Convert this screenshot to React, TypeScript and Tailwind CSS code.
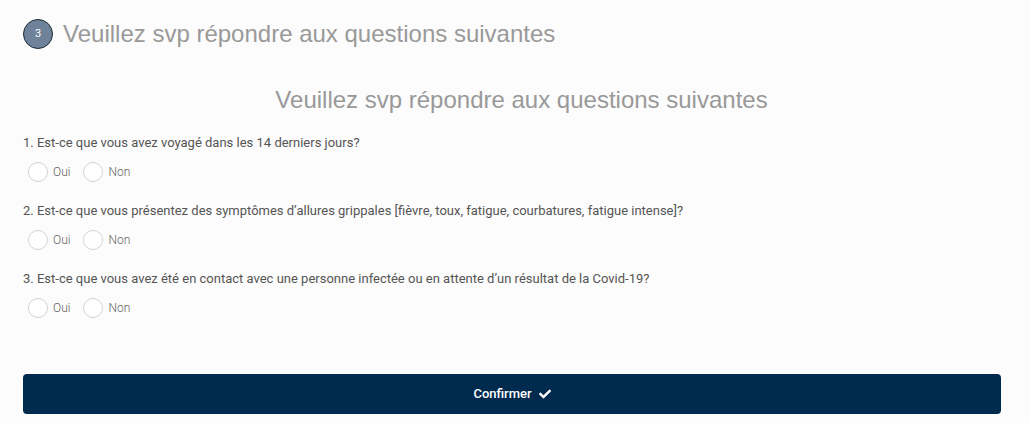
import React from "react";
import { FaCheck } from "react-icons/fa";

const questions = [
  "1. Est-ce que vous avez voyagé dans les 14 derniers jours?",
  "2. Est-ce que vous présentez des symptômes d’allures grippales [fièvre, toux, fatigue, courbatures, fatigue intense]?",
  "3. Est-ce que vous avez été en contact avec une personne infectée ou en attente d’un résultat de la Covid-19?",
];

const Radio: React.FC<{ label: string }> = ({ label }) => (
  <label className="flex items-center gap-[5px] mr-[13px]">
    <span className="w-[20px] h-[20px] rounded-full border border-[#d4d4d4] bg-white" />
    <span className="text-[12px] font-light text-[#666]">{label}</span>
  </label>
);

export default function App() {
  return (
    <div className="min-h-[423px] bg-[#fcfcfc] pl-[23px] pr-[28px] pt-[19px]" style={{ fontFamily: "Roboto, 'Liberation Sans', sans-serif" }}>
      <div className="flex items-center gap-[10px] h-[30px]">
        <span className="w-[30px] h-[30px] rounded-full bg-[#6e8399] border border-[#1d2a38] flex items-center justify-center text-white text-[11px]">
          3
        </span>
        <h2 className="text-[24px] text-[#999] leading-none" style={{ fontFamily: "'Liberation Sans', Arial, sans-serif" }}>
          Veuillez svp répondre aux questions suivantes
        </h2>
      </div>

      <h3 className="mt-[39px] pl-[19px] text-center text-[24px] text-[#999] leading-none" style={{ fontFamily: "'Liberation Sans', Arial, sans-serif" }}>
        Veuillez svp répondre aux questions suivantes
      </h3>

      <div className="mt-[23px] flex flex-col gap-[21px]">
        {questions.map((q) => (
          <div key={q}>
            <p className="text-[13px] text-[#555] leading-[16px]">{q}</p>
            <div className="flex items-center mt-[11px] pl-[5px]">
              <Radio label="Oui" />
              <Radio label="Non" />
            </div>
          </div>
        ))}
      </div>

      <button className="mt-[56px] w-full h-[40px] rounded-[4px] bg-[#002b4f] text-white text-[13px] font-medium flex items-center justify-center gap-[7px]">
        Confirmer
        <FaCheck className="text-[12px]" />
      </button>
    </div>
  );
}
